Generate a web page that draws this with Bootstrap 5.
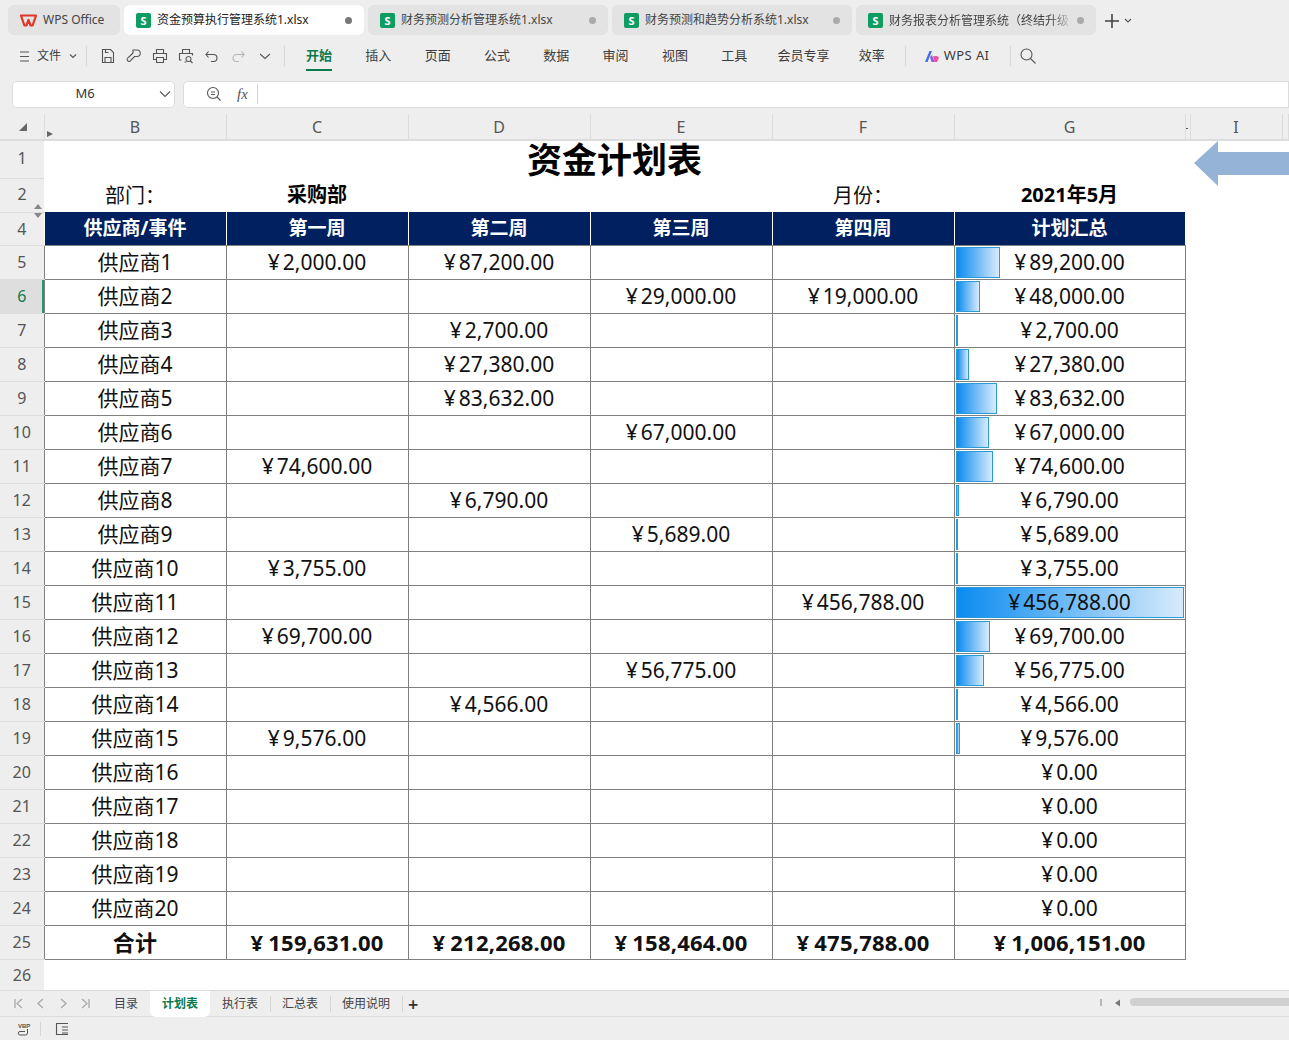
<!DOCTYPE html>
<html lang="zh-CN">
<head>
<meta charset="UTF-8">
<meta name="viewport" content="width=device-width, initial-scale=1.0">
<title>资金计划表</title>
<link href="https://cdn.jsdelivr.net/npm/bootstrap@5.3.0/dist/css/bootstrap.min.css" rel="stylesheet">
<style>
html, body { height: 100%; overflow: hidden; }
body { background: #eeeeee; color: #333; font-family: "Noto Sans", "Noto Sans CJK SC", sans-serif; font-size: 12px; }
.app { width: 1289px; height: 1040px; overflow: hidden; }
.ic { fill: none; stroke: #555; stroke-width: 1.1; flex: none; }
.tcpunct { font-family: "Noto Sans CJK TC", sans-serif; }

.tabbar { height: 38px; padding: 5px 0 0 8px; gap: 4px; }
.doc { width: 240px; height: 30px; background: #e3e3e3; border-radius: 6px; padding: 0 12px; color: #444; white-space: nowrap; }
.doc.home { width: 112px; padding: 0 0 0 12px; }
.doc.on { background: #fff; color: #222; }
.doc .nm { flex: 1; margin-left: 6px; overflow: hidden; }
.doc .nm.fadeout { -webkit-mask-image: linear-gradient(90deg, #000 88%, transparent); mask-image: linear-gradient(90deg, #000 88%, transparent); }
.doc .dot { width: 7px; height: 7px; border-radius: 50%; background: #aaa; flex: none; }
.doc.on .dot { background: #777; }
.stile { width: 15px; height: 15px; border-radius: 2px; background: #0d9c62; color: #fff; font-size: 11px; font-weight: 700; line-height: 15px; text-align: center; flex: none; }

.ribbon { height: 40px; padding: 0 0 4px 20px; font-size: 13px; color: #3c3c3c; white-space: nowrap; }
.vsep { width: 1px; height: 20px; background: #d6d6d6; flex: none; }
.filem { font-size: 12px; }
.rtabs { gap: 33.3px; margin-left: 21px; }
.rtabs .cur { color: #0b7a4f; font-weight: 700; position: relative; }
.rtabs .cur::after { content: ""; position: absolute; left: 0; right: 0; bottom: -5px; height: 2px; background: #0b7a4f; }
.rtabs .vip { margin-left: -3px; }
.rtabs .eff { margin-left: -4px; }
.wpsai { letter-spacing: .4px; }
.qbtns { gap: 10px; margin: 0 14px 0 13px; }

.fbar { height: 28px; margin-top: 2px; padding-left: 12px; gap: 8px; }
.namebox, .fbox { height: 27px; background: #fff; box-shadow: inset 0 0 0 1px #dcdcdc; }
.namebox { width: 163px; border-radius: 5px; }
.namebox span { flex: 1; text-align: center; font-size: 13px; padding-left: 7px; margin-right: 8px; }
.fbox { flex: 1; padding-left: 23px; border-radius: 5px 0 0 5px; }
.fxt { font-family: "Liberation Serif", serif; font-style: italic; font-size: 15px; color: #555; margin: 0 9px 0 15px; }

.gridwrap { position: relative; margin-top: 6px; height: 876px; overflow: hidden; background: #fff; }
.sheet { border-collapse: collapse; table-layout: fixed; width: 1289px; font-size: 21px; color: #111; }
.sheet td, .sheet th { padding: 0; text-align: center; vertical-align: middle; white-space: nowrap; line-height: 1; }
.colh th { height: 26px; background: #eeeeee; border-right: 1px solid #dcdcdc; border-bottom: 2px solid #dcdcdc; font-weight: 400; font-size: 16px; color: #555; }
.sheet th.rn { background: #eeeeee; border-bottom: 1px solid #dcdcdc; font-weight: 400; font-size: 16px; color: #555; position: relative; }
.sheet th.rn.up2 { padding-bottom: 2px; }
.sheet th.rn.sel { background: #dedede; color: #0b7a4f; box-shadow: inset -2px 0 0 #1f9a6a; }
.sheet .cell { border: 1px solid #808080; position: relative; overflow: hidden; }
.sheet .head { background: #002060; color: #fff; font-weight: 700; border: 1px solid #fff; border-top: 0; border-bottom-color: #808080; font-size: 19px; }
.sheet .head:last-of-type { border-right-color: #002060; }
.sheet .total { font-weight: 700; font-size: 22px; letter-spacing: .2px; }
.total .yen { margin-right: 5px; }
.titlec { font-size: 35px; font-weight: 700; color: #000; }
.lab { font-size: 20px; }
.labb { font-size: 20px; font-weight: 700; color: #000; }
.yen { margin-right: 3px; }
.databar { position: absolute; left: 1px; top: 1px; bottom: 1px; background: linear-gradient(90deg, #0a8bf0, #d8ebfc); border: 1px solid #2a9bd8; }
.val { position: relative; }
.arrowmark { position: absolute; left: 1193px; top: 26px; }
.cornertri { position: absolute; left: 19px; top: 9px; width: 0; height: 0; border-style: solid; border-width: 0 0 8px 8px; border-color: transparent transparent #666 transparent; }
.outl { position: absolute; left: 47px; top: 17px; width: 0; height: 0; border-style: solid; border-width: 3px 0 3px 6px; border-color: transparent transparent transparent #666; }
.hidemark { position: absolute; left: 34px; width: 0; height: 0; border-style: solid; border-left: 4px solid transparent; border-right: 4px solid transparent; }
.hidemark.up { top: 90px; border-bottom: 5px solid #888; border-top: 0; }
.hidemark.dn { top: 99px; border-top: 5px solid #888; border-bottom: 0; }
.gdash { position: absolute; left: 1186px; top: 14px; width: 2px; height: 1px; background: #555; }

.sheetbar { height: 27px; border-top: 1px solid #dcdcdc; border-bottom: 1px solid #dcdcdc; padding-left: 14px; color: #444; white-space: nowrap; position: relative; }
.navs { gap: 12px; width: 88px; }
.stab { padding: 0 12px; height: 26px; line-height: 26px; position: relative; }
.stab + .stab::before { content: ""; position: absolute; left: 0; top: 5px; height: 16px; width: 1px; background: #d6d6d6; }
.stab.cur { background: #fff; color: #0b7a4f; font-weight: 700; border-radius: 0 0 6px 6px; }
.stab.cur::before, .stab.cur + .stab::before { display: none; }
.stabend { width: 1px; }
.addsheet { font-size: 18px; font-weight: 600; margin-left: 5px; line-height: 1; color: #333; }
.scrollctl { position: absolute; left: 1098px; top: 7px; }
.hscroll { position: absolute; left: 1130px; top: 7px; width: 170px; height: 8px; border-radius: 4px; background: #d0d0d0; }
.statusb { height: 23px; padding-left: 17px; }
.statusb .vsep { height: 14px; }
.vbt { font-size: 6px; font-weight: 700; fill: #555; font-family: "Liberation Sans", sans-serif; }
.outlineic { margin-left: 14px; }
</style>
</head>
<body>
<div class="app d-flex flex-column">

  <div class="tabbar d-flex align-items-start">
    <div class="doc home d-flex align-items-center">
      <svg width="17" height="13" viewBox="0 0 17 13"><path d="M1 1.500h15L12.600 11.500h-2L8.500 6 6.400 11.500h-2z" fill="none" stroke="#e2352b" stroke-width="2.200" stroke-linejoin="round"/></svg>
      <span class="nm">WPS Office</span>
    </div>
    <div class="doc on d-flex align-items-center"><span class="stile">S</span><span class="nm">资金预算执行管理系统1.xlsx</span><span class="dot"></span></div>
    <div class="doc d-flex align-items-center"><span class="stile">S</span><span class="nm">财务预测分析管理系统1.xlsx</span><span class="dot"></span></div>
    <div class="doc d-flex align-items-center"><span class="stile">S</span><span class="nm">财务预测和趋势分析系统1.xlsx</span><span class="dot"></span></div>
    <div class="doc d-flex align-items-center"><span class="stile">S</span><span class="nm fadeout">财务报表分析管理系统<span class="tcpunct">（</span>终结升级</span><span class="dot ms-1"></span></div>
    <svg class="ms-1 mt-2" width="16" height="16" viewBox="0 0 16 16"><path d="M8 1v14M1 8h14" stroke="#444" stroke-width="1.600"/></svg>
    <svg class="mt-2" width="8" height="14" viewBox="0 0 8 14"><path class="ic" d="M1 6l3 3 3-3"/></svg>
  </div>

  <div class="ribbon d-flex align-items-center">
    <svg width="9" height="11" viewBox="0 0 9 11"><path d="M0 1h9M0 5.500h9M0 10h9" stroke="#555" stroke-width="1.100"/></svg>
    <span class="ms-2 filem">文件</span>
    <svg class="ms-2" width="8" height="8" viewBox="0 0 8 8"><path class="ic" d="M1 2.500l3 3 3-3"/></svg>
    <span class="vsep" style="margin-left:9px"></span>
    <div class="qbtns d-flex align-items-center">
      <svg class="ic" width="16" height="16" viewBox="0 0 16 16"><path d="M2.500 1.500h8l3 3v10h-11zM5 14.500v-5h6v5M5.500 1.500v3h3"/></svg>
      <svg class="ic" width="16" height="16" viewBox="0 0 16 16"><path d="M7 2h4a3 3 0 0 1 0 6.500H8.500L5 12a2 2 0 1 1-2.500-2.500L7 5z"/></svg>
      <svg class="ic" width="16" height="16" viewBox="0 0 16 16"><path d="M4.500 5.500v-4h7v4M4.500 11.500h-3v-6h13v6h-3M4.500 9.500h7v5h-7z"/></svg>
      <svg class="ic" width="16" height="16" viewBox="0 0 16 16"><path d="M4.500 5v-3.500h7V5M3.500 12h-2V5.500h13v2M8.500 14h-2M10.500 8.500a2.500 2.500 0 1 0 .01 0zM12.500 13l2 2"/></svg>
      <svg class="ic" width="16" height="16" viewBox="0 0 16 16"><path d="M2 6.500h7.500a3.500 3.500 0 0 1 0 7H7M4.500 3.500L2 6.500l2.500 3"/></svg>
      <svg width="16" height="16" viewBox="0 0 16 16" fill="none" stroke="#b5b5b5" stroke-width="1.100"><path d="M14 6.500H6.500a3.500 3.500 0 0 0 0 7H9M11.500 3.500l2.500 3-2.500 3"/></svg>
      <svg class="ic ms-1" width="10" height="16" viewBox="0 0 10 16"><path d="M0 6l5 4.500L10 6"/></svg>
    </div>
    <span class="vsep"></span>
    <div class="rtabs d-flex align-items-center">
      <span class="cur">开始</span><span>插入</span><span>页面</span><span>公式</span><span>数据</span><span>审阅</span><span>视图</span><span>工具</span><span class="vip">会员专享</span><span class="eff">效率</span>
    </div>
    <span class="vsep" style="margin-left:20px"></span>
    <svg style="margin-left:18px" width="16" height="13" viewBox="0 0 16 13"><path d="M1 12L5.500 1H8L3.500 12z" fill="#3d6fe8"/><path d="M6 7l2-2 2.500 7H7.500z" fill="#8a5cf0"/><path d="M9 6.500c2-1 5-.5 6 1l-2 4.500h-2.500z" fill="#f04fa0"/></svg>
    <span class="ms-1 wpsai">WPS AI</span>
    <span class="vsep" style="margin-left:21px"></span>
    <svg class="ic ms-2" width="18" height="18" viewBox="0 0 18 18"><circle cx="7.500" cy="7.500" r="5.500"/><path d="M11.500 11.500l5 5"/></svg>
  </div>

  <div class="fbar d-flex align-items-center">
    <div class="namebox d-flex align-items-center">
      <span>M6</span>
      <svg class="ic me-1" width="12" height="8" viewBox="0 0 12 8"><path d="M1 1.500l5 5 5-5"/></svg>
    </div>
    <div class="fbox d-flex align-items-center">
      <svg class="ic" width="16" height="16" viewBox="0 0 16 16"><circle cx="7" cy="7" r="5.500"/><path d="M11 11l3.500 3.500M5 6h4M5 8.500h4"/></svg>
      <span class="fxt">fx</span>
      <span class="vsep"></span>
    </div>
  </div>

  <div class="gridwrap">
    <table class="sheet">
      <colgroup>
        <col style="width:44px"><col style="width:182px"><col style="width:182px"><col style="width:182px"><col style="width:182px"><col style="width:182px"><col style="width:231px"><col style="width:5px"><col style="width:92px"><col>
      </colgroup>
      <tbody id="sheetBody"></tbody>
    </table>
    <svg class="arrowmark" width="96" height="48" viewBox="0 0 96 48"><path d="M1 23L25 1v11h71v23H25v11z" fill="#95b3d7"/></svg>
    <span class="cornertri"></span>
    <span class="outl"></span>
    <span class="hidemark up"></span>
    <span class="hidemark dn"></span>
    <span class="gdash"></span>
  </div>

  <div class="sheetbar d-flex align-items-center">
    <div class="navs d-flex align-items-center">
      <svg width="10" height="11" viewBox="0 0 10 11" fill="none" stroke="#aaa" stroke-width="1.300"><path d="M1 1v9M8 1L3 5.500 8 10"/></svg>
      <svg width="10" height="11" viewBox="0 0 10 11" fill="none" stroke="#aaa" stroke-width="1.300"><path d="M7 1L2 5.500 7 10"/></svg>
      <svg width="10" height="11" viewBox="0 0 10 11" fill="none" stroke="#aaa" stroke-width="1.300"><path d="M3 1l5 4.500L3 10"/></svg>
      <svg width="10" height="11" viewBox="0 0 10 11" fill="none" stroke="#aaa" stroke-width="1.300"><path d="M2 1l5 4.500L2 10M9 1v9"/></svg>
    </div>
    <span class="stab">目录</span>
    <span class="stab cur">计划表</span>
    <span class="stab">执行表</span>
    <span class="stab">汇总表</span>
    <span class="stab">使用说明</span>
    <span class="stab stabend p-0"></span>
    <span class="addsheet">+</span>
    <svg class="scrollctl" width="24" height="10" viewBox="0 0 24 10"><path d="M3 1v7" stroke="#999" stroke-width="1.300"/><path d="M17 5l5-3.500v7z" fill="#777"/></svg>
    <span class="hscroll"></span>
  </div>

  <div class="statusb d-flex align-items-center">
    <svg width="15" height="14" viewBox="0 0 15 14" fill="none" stroke="#555"><text class="vbt" x="1" y="6" stroke="none">VBP</text><path d="M10.500 7v4a2 2 0 0 1-2 2H3a1.500 1.500 0 0 1 0-3.500h5"/></svg>
    <span class="vsep ms-2"></span>
    <svg class="ic outlineic" width="14" height="14" viewBox="0 0 14 14"><path d="M13 1.500H1.500v11H13M7 5h6M7 8h6M7 11h6"/></svg>
  </div>
</div>

<script>
  // amounts per supplier, one column per week
  const rows = [
    [2000, 87200, 0, 0], [0, 0, 29000, 19000], [0, 2700, 0, 0], [0, 27380, 0, 0], [0, 83632, 0, 0],
    [0, 0, 67000, 0], [74600, 0, 0, 0], [0, 6790, 0, 0], [0, 0, 5689, 0], [3755, 0, 0, 0],
    [0, 0, 0, 456788], [69700, 0, 0, 0], [0, 0, 56775, 0], [0, 4566, 0, 0], [9576, 0, 0, 0],
    [0, 0, 0, 0], [0, 0, 0, 0], [0, 0, 0, 0], [0, 0, 0, 0], [0, 0, 0, 0]
  ];
  const maxVal = 456788;
  const fmt = n => '<span class="yen">¥</span>' + n.toLocaleString('en-US', { minimumFractionDigits: 2, maximumFractionDigits: 2 });
  const money = n => n ? fmt(n) : '';
  const colon = '<span class="tcpunct">：</span>';

  let html = '<tr class="colh"><th></th>' + ['B','C','D','E','F','G','','I',''].map(c => `<th>${c}</th>`).join('') + '</tr>';
  html += '<tr style="height:38px"><th class="rn up2">1</th><td colspan="6" class="titlec">资金计划表</td><td colspan="3"></td></tr>';
  html += `<tr style="height:34px"><th class="rn up2">2</th><td class="lab">部门${colon}</td><td class="labb">采购部</td><td></td><td></td><td class="lab">月份${colon}</td><td class="labb">2021年5月</td><td colspan="3"></td></tr>`;
  html += '<tr style="height:33px"><th class="rn">4</th>' + ['供应商/事件','第一周','第二周','第三周','第四周','计划汇总'].map(t => `<td class="head">${t}</td>`).join('') + '<td colspan="3"></td></tr>';

  rows.forEach((r, i) => {
    const sum = r.reduce((a, b) => a + b, 0);
    const barW = sum / maxVal * 228;
    const bar = sum ? `<span class="databar" style="width:${barW.toFixed(1)}px"></span>` : '';
    html += `<tr style="height:34px"><th class="rn${i === 1 ? ' sel' : ''}">${i + 5}</th><td class="cell">供应商${i + 1}</td>`
      + r.map(v => `<td class="cell">${money(v)}</td>`).join('')
      + `<td class="cell">${bar}<span class="val">${fmt(sum)}</span></td><td colspan="3"></td></tr>`;
  });

  const totals = [159631, 212268, 158464, 475788];
  html += '<tr style="height:34px"><th class="rn">25</th><td class="cell total">合计</td>'
    + totals.map(v => `<td class="cell total">${fmt(v)}</td>`).join('')
    + `<td class="cell total">${fmt(1006151)}</td><td colspan="3"></td></tr>`;
  html += '<tr style="height:31px"><th class="rn">26</th><td colspan="9"></td></tr>';
  document.getElementById('sheetBody').innerHTML = html;
</script>
<script src="https://cdn.jsdelivr.net/npm/bootstrap@5.3.0/dist/js/bootstrap.bundle.min.js"></script>
</body>
</html>
